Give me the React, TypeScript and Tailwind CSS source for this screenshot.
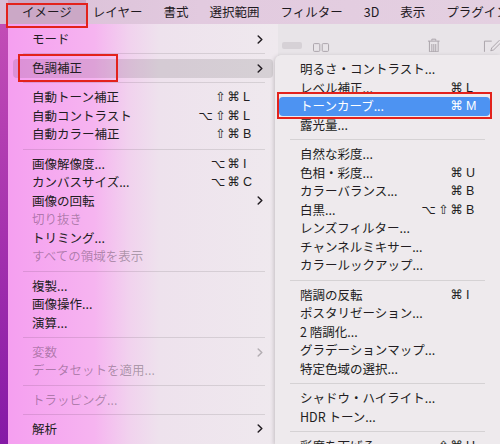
import React from "react";

type Item =
	| { sep: true }
	| {
			sep?: false;
			label: string;
			mods?: string;
			keyChar?: string;
			arrow?: boolean;
			disabled?: boolean;
			active?: "gray" | "blue";
			boxed?: boolean;
	  };

const S: Item = { sep: true };

const imageMenu: Item[] = [
	{ label: "モード", arrow: true },
	S,
	{ label: "色調補正", arrow: true, active: "gray", boxed: true },
	S,
	{ label: "自動トーン補正", mods: "⇧⌘", keyChar: "L" },
	{ label: "自動コントラスト", mods: "⌥⇧⌘", keyChar: "L" },
	{ label: "自動カラー補正", mods: "⇧⌘", keyChar: "B" },
	S,
	{ label: "画像解像度...", mods: "⌥⌘", keyChar: "I" },
	{ label: "カンバスサイズ...", mods: "⌥⌘", keyChar: "C" },
	{ label: "画像の回転", arrow: true },
	{ label: "切り抜き", disabled: true },
	{ label: "トリミング..." },
	{ label: "すべての領域を表示", disabled: true },
	S,
	{ label: "複製..." },
	{ label: "画像操作..." },
	{ label: "演算..." },
	S,
	{ label: "変数", arrow: true, disabled: true },
	{ label: "データセットを適用...", disabled: true },
	S,
	{ label: "トラッピング...", disabled: true },
	S,
	{ label: "解析", arrow: true },
];

const adjustMenu: Item[] = [
	{ label: "明るさ・コントラスト..." },
	{ label: "レベル補正...", mods: "⌘", keyChar: "L" },
	{ label: "トーンカーブ...", mods: "⌘", keyChar: "M", active: "blue", boxed: true },
	{ label: "露光量..." },
	S,
	{ label: "自然な彩度..." },
	{ label: "色相・彩度...", mods: "⌘", keyChar: "U" },
	{ label: "カラーバランス...", mods: "⌘", keyChar: "B" },
	{ label: "白黒...", mods: "⌥⇧⌘", keyChar: "B" },
	{ label: "レンズフィルター..." },
	{ label: "チャンネルミキサー..." },
	{ label: "カラールックアップ..." },
	S,
	{ label: "階調の反転", mods: "⌘", keyChar: "I" },
	{ label: "ポスタリゼーション..." },
	{ label: "2 階調化..." },
	{ label: "グラデーションマップ..." },
	{ label: "特定色域の選択..." },
	S,
	{ label: "シャドウ・ハイライト..." },
	{ label: "HDR トーン..." },
	S,
	{ label: "彩度を下げる", mods: "⇧⌘", keyChar: "U" },
];

function Chevron() {
	return (
		<svg width="6" height="9" viewBox="0 0 6 9" fill="none" aria-hidden>
			<path d="M1.2 1 L4.8 4.5 L1.2 8" stroke="currentColor" strokeWidth="1.5" strokeLinecap="round" strokeLinejoin="round" />
		</svg>
	);
}

function MenuList({ items, sub }: { items: Item[]; sub?: boolean }) {
	return (
		<>
			{items.map((it, i) => {
				if (it.sep) {
					return (
						<div key={i} className={`h-[10.5px] shrink-0 flex items-center ${sub ? "ml-[11px] mr-[5px]" : "ml-[10px] mr-[8px]"}`}>
							<div className="h-px w-full bg-black/10" />
						</div>
					);
				}
				const blue = it.active === "blue";
				return (
					<div
						key={i}
						className={`relative h-[18.6px] shrink-0 flex items-center rounded-[4px] ${sub ? "pl-[21px] pr-[12px]" : "pl-[19px] pr-[10px]"} ${
							blue ? "bg-[#4d93f2] text-white" : it.active === "gray" ? "bg-black/10" : ""
						} ${it.disabled ? "text-black/30" : blue ? "" : "text-[#221d22]"}`}
					>
						<span className="flex-1 whitespace-nowrap">{it.label}</span>
						{it.keyChar && (
							<span className="flex whitespace-nowrap font-['Liberation_Sans','DejaVu_Sans',sans-serif] text-[12.5px]">
								<span className="text-right tracking-[2px]">{it.mods}</span>
								<span className="w-[13px] pl-[1px]">{it.keyChar}</span>
							</span>
						)}
						{!sub && (
							<span className={`w-[6px] ml-[2px] flex items-center ${it.disabled ? "text-black/25" : "text-[#221d22]"}`}>
								{it.arrow && <Chevron />}
							</span>
						)}
						{it.boxed && (
							<span
								className={`absolute border-2 border-[#e3221c] pointer-events-none ${
									sub ? "-inset-x-[2px] -top-[5px] -bottom-[3px]" : "left-[5px] w-[100px] -top-[5px] -bottom-[4px]"
								}`}
							/>
						)}
					</div>
				);
			})}
		</>
	);
}

function Toolbar() {
	return (
		<div className="h-[31px] shrink-0 bg-[#e8e4e8] flex items-end pb-[3px] text-[#a9a3a9]">
			<div className="ml-[4px] mb-[3px] w-[21px] h-[7px] rounded-[2px] bg-[#d6d1d6]" />
			<svg className="ml-[11px]" width="17" height="9" viewBox="0 0 17 9" fill="none" aria-hidden>
				<rect x="0.5" y="0.5" width="6.5" height="8" rx="1" stroke="currentColor" />
				<rect x="9.5" y="0.5" width="6.5" height="8" rx="1" stroke="currentColor" />
			</svg>
			<svg className="ml-[97px]" width="14" height="14" viewBox="0 0 14 14" fill="none" aria-hidden>
				<path d="M5 2.5 V1 H9 V2.5 M1 3 H13 M2.5 3 V14 H11.5 V3 M5 6 V14 M7 6 V14 M9 6 V14" stroke="currentColor" strokeWidth="1" />
			</svg>
			<svg className="ml-[42px]" width="18" height="13" viewBox="0 0 18 13" fill="none" aria-hidden>
				<path d="M9 2 H1.5 V13 M17 1 L9 9 L8 12 L11 11 L18 4" stroke="currentColor" strokeWidth="1" />
			</svg>
		</div>
	);
}

export default function App() {
	const bar = ["レイヤー", "書式", "選択範囲", "フィルター", "3D", "表示", "プラグイン"];
	return (
		<div className="w-[500px] h-[444px] overflow-hidden flex flex-col bg-[#ece8ec] font-['Noto_Sans_CJK_JP',sans-serif] text-[12.5px] leading-none">
			<div className="h-[24px] shrink-0 flex items-stretch pl-[8px] bg-[linear-gradient(90deg,#d9bed6,#e2cadf_40%,#e4d0e1)] text-[#1f1a1f] text-[12.5px] relative z-20 whitespace-nowrap">
				<div className="relative shrink-0 flex items-center px-[14px] bg-[#cba8c6]">
					イメージ
					<span className="absolute -left-[2px] -right-[2px] top-[3px] -bottom-[4px] border-2 border-[#e3221c]" />
				</div>
				<div className="flex items-center gap-[21px] ml-[7px]">
					{bar.map((b) => (
						<span key={b}>{b}</span>
					))}
				</div>
			</div>
			<div className="flex flex-1 min-h-0">
				<div className="w-[8px] shrink-0 bg-[linear-gradient(180deg,#c24db6,#a532ae_50%,#8519a6)]" />
				<div className="w-[270px] shrink-0 flex flex-col overflow-hidden pt-[6px] px-[5px] bg-[linear-gradient(90deg,#f59ff0_0%,#f6b4f0_32%,#f1d2ee_45%,#eee2ed_56%,#efe9ee_100%)] shadow-[1px_0_2px_rgba(0,0,0,0.08)]">
					<MenuList items={imageMenu} />
				</div>
				<div className="flex-1 flex flex-col min-w-0">
					<Toolbar />
					<div className="relative z-10 -ml-[3px] flex-1 min-h-0 overflow-hidden flex flex-col pt-[5px] pl-[4px] pr-[10px] bg-[#eeeaed] rounded-tl-[6px] shadow-[-1px_1px_4px_rgba(0,0,0,0.18)]">
						<MenuList items={adjustMenu} sub />
					</div>
				</div>
			</div>
		</div>
	);
}
